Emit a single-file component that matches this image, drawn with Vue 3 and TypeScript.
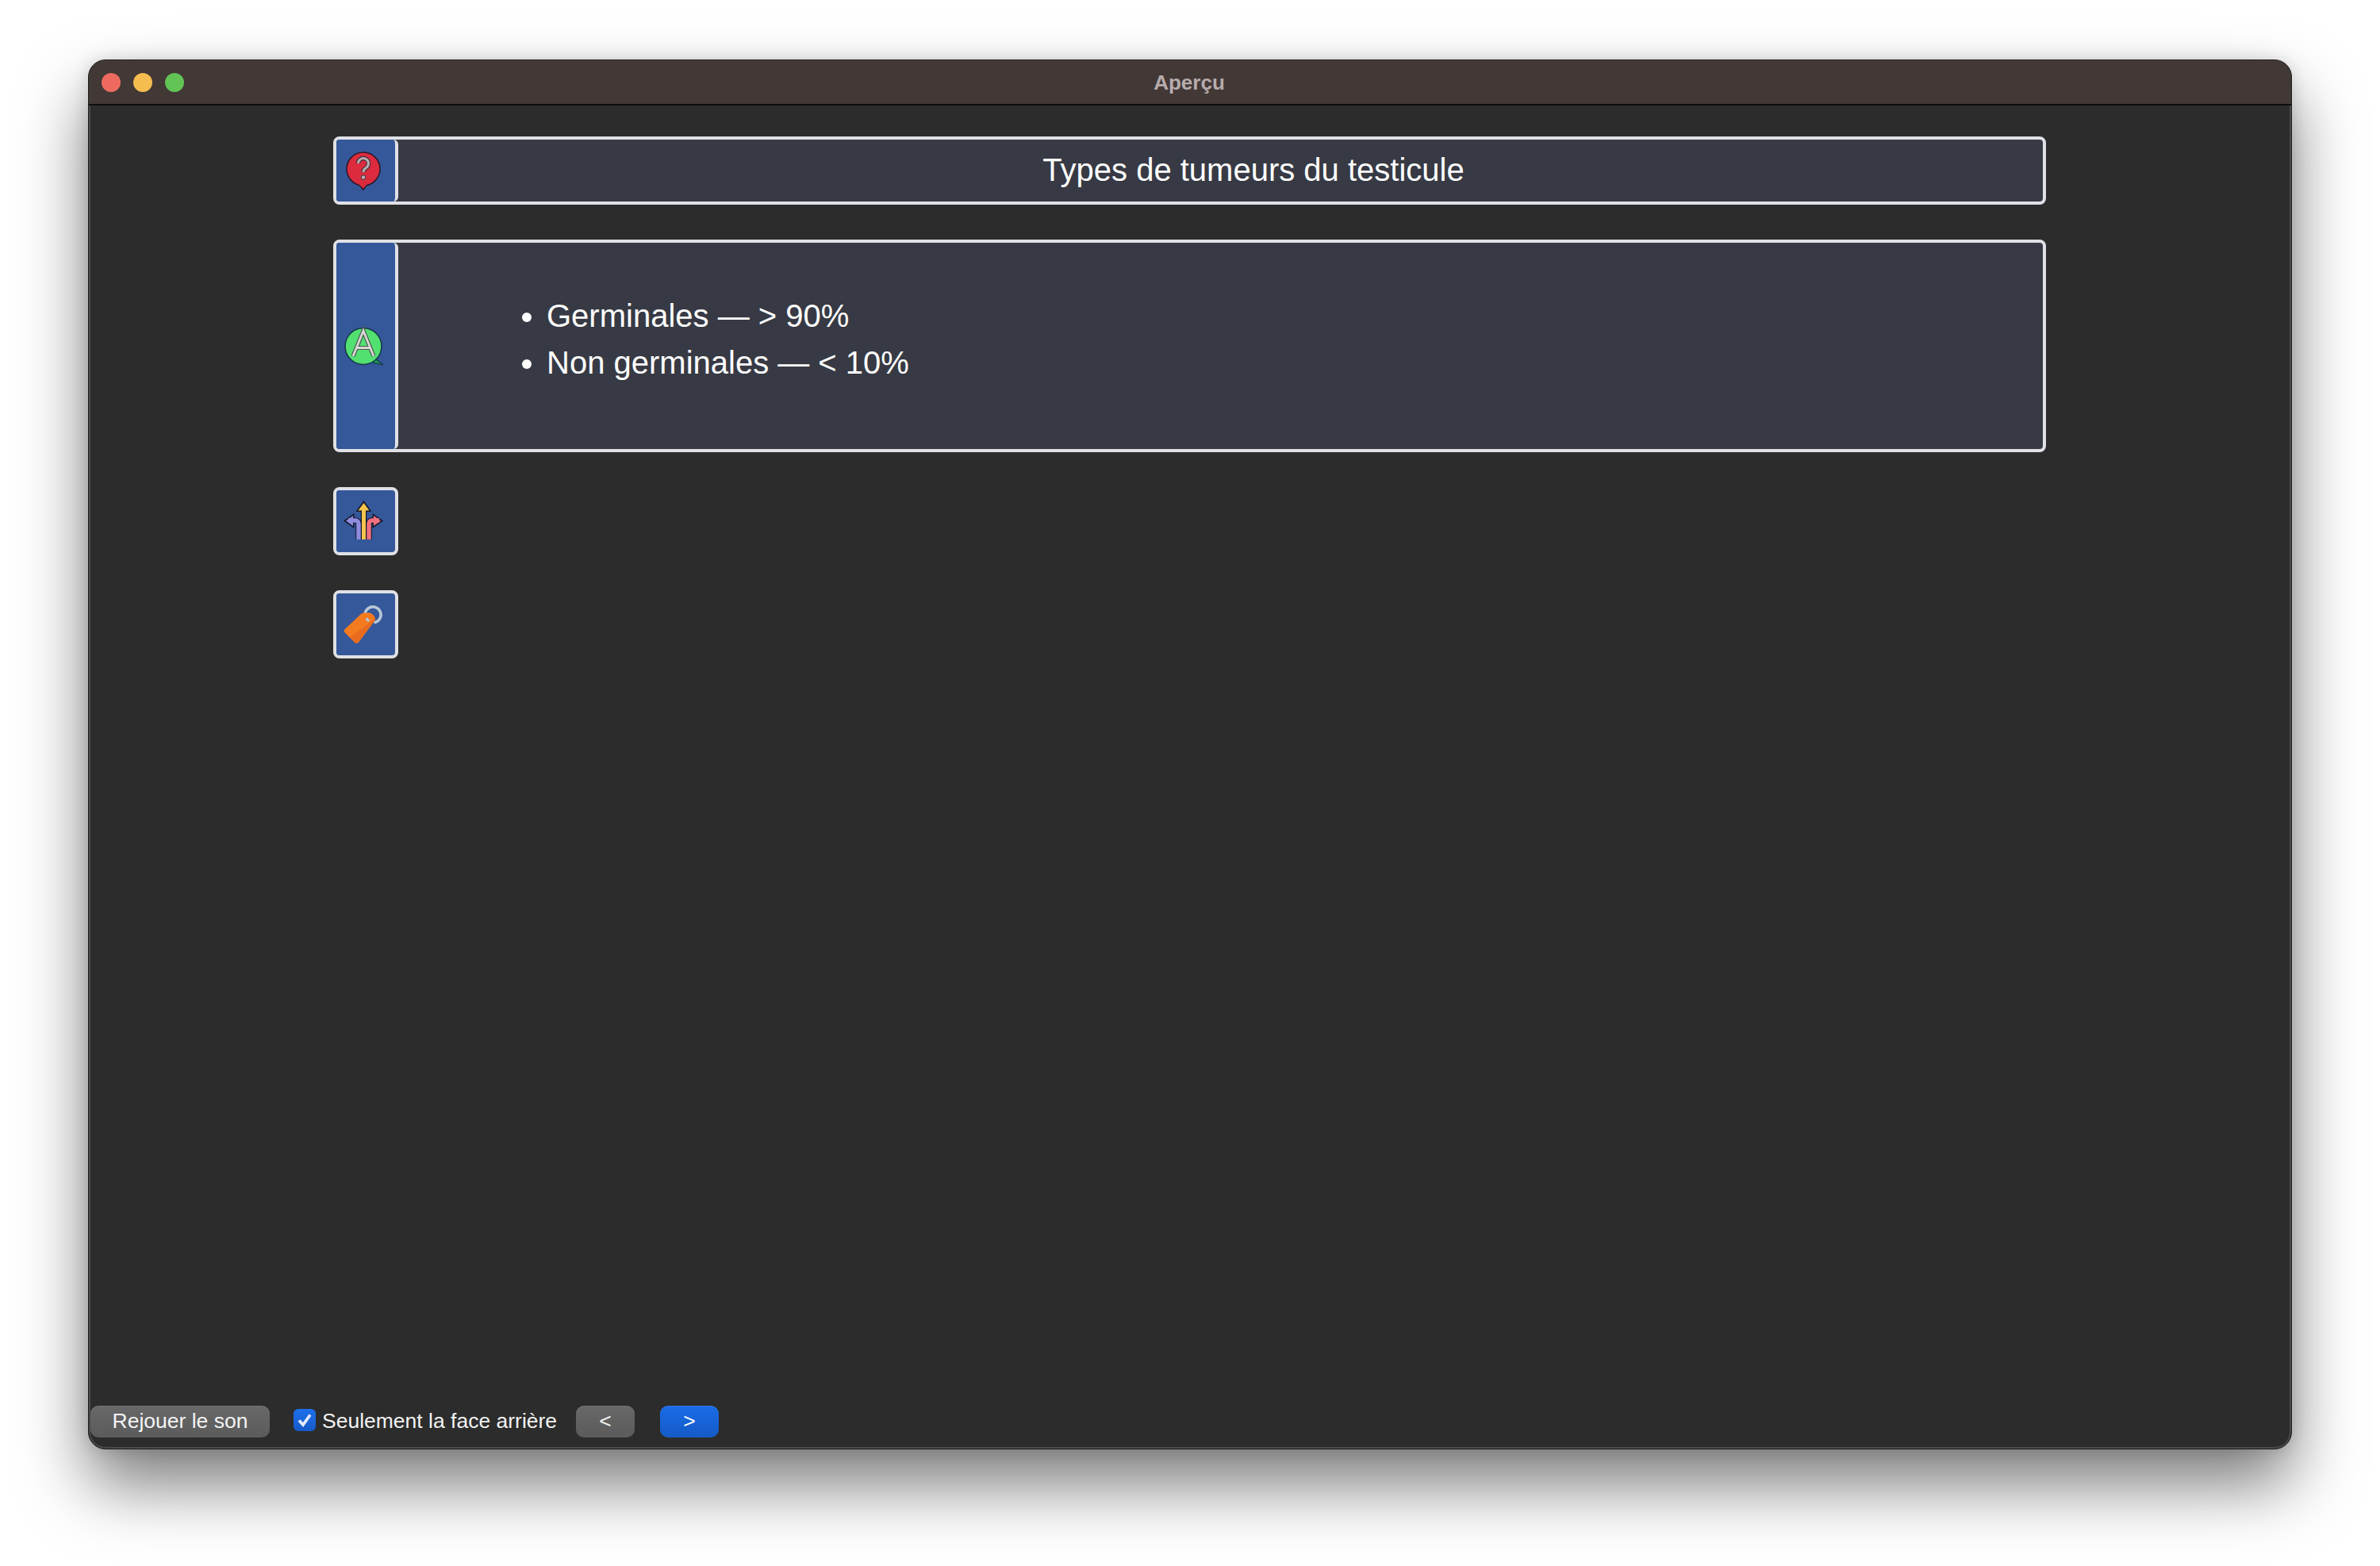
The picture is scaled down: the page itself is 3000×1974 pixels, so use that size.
<script setup lang="ts">
const lights: string[] = ['#ee6a5f', '#f5bd4f', '#61c454']
const items: string[] = ['Germinales — > 90%', 'Non germinales — < 10%']
</script>

<template>
  <div class="stage">
    <div class="window">
      <header class="titlebar">
        <div class="lights">
          <span v-for="c in lights" :key="c" class="light" :style="{ background: c }"></span>
        </div>
        <span class="wintitle">Aperçu</span>
      </header>

      <main class="content">
        <section class="card title-card">
          <div class="icon-col">
            <svg class="ico" viewBox="0 0 60 60">
              <path d="M21 47 27 54l5-7z" fill="#dc2b3f" stroke="#2b1a2a" stroke-width="2" />
              <circle cx="27" cy="28" r="21" fill="#dc2b3f" stroke="#2b1a2a" stroke-width="1.600" />
              <path d="M21 47 27 52.500l5-5.500z" fill="#dc2b3f" />
              <path d="M20.500 21a6.500 6.500 0 1 1 10 5.500c-2.300 1.500-3.500 2.500-3.500 5.500" fill="none" stroke="#3d3038" stroke-width="5.400" />
              <path d="M20.500 21a6.500 6.500 0 1 1 10 5.500c-2.300 1.500-3.500 2.500-3.500 5.500" fill="none" stroke="#b9adb2" stroke-width="3" />
              <circle cx="27" cy="38.500" r="2.800" fill="#b9adb2" stroke="#3d3038" />
            </svg>
          </div>
          <h1 class="title">Types de tumeurs du testicule</h1>
        </section>

        <section class="card answer-card">
          <div class="icon-col">
            <svg class="ico" viewBox="0 0 60 60">
              <path d="M42 46 52 54l-13-3z" fill="#1c9a50" stroke="#17384a" stroke-width="1.200" />
              <circle cx="27" cy="30.500" r="23" fill="#52e070" stroke="#17384a" stroke-width="1.600" />
              <path d="M14 43 27 11l13 32M18.500 32.500h17" fill="none" stroke="#4b5a56" stroke-width="5.200" />
              <path d="M14 43 27 11l13 32M18.500 32.500h17" fill="none" stroke="#d6d8d0" stroke-width="2.800" />
            </svg>
          </div>
          <ul class="list">
            <li v-for="t in items" :key="t">{{ t }}</li>
          </ul>
        </section>

        <section class="card square">
          <div class="icon-col">
            <svg class="ico" viewBox="0 0 60 60">
              <path d="M21 53V33a4 4 0 0 0-4-4H8" fill="none" stroke="#16182a" stroke-width="7.500" />
              <path d="M34 53V33a4 4 0 0 1 4-4h9" fill="none" stroke="#16182a" stroke-width="7.500" />
              <path d="M27.500 53V14" fill="none" stroke="#16182a" stroke-width="7.500" />
              <path d="M2 29.500 15.500 20v19zM52 29.500 38.500 20v19zM27.500 4l10 14h-20z" fill="#16182a" />
              <path d="M21 53V33a4 4 0 0 0-4-4H8" fill="none" stroke="#8f8ce0" stroke-width="5.500" />
              <path d="M34 53V33a4 4 0 0 1 4-4h9" fill="none" stroke="#f0707f" stroke-width="5.500" />
              <path d="M5 29.500 14 23v13z" fill="#8f8ce0" />
              <path d="M49 29.500 40 23v13z" fill="#f0707f" />
              <path d="M27.500 53V14" fill="none" stroke="#f4c44e" stroke-width="5" />
              <path d="M27.500 7l7 9.500h-14z" fill="#f4c44e" />
            </svg>
          </div>
        </section>

        <section class="card square">
          <div class="icon-col">
            <svg class="ico" viewBox="0 0 60 60">
              <path d="M32 25a10 10 0 1 1 10 2.500" fill="none" stroke="#b7c7d6" stroke-width="3.600" stroke-linecap="round" />
              <path d="M35 15.500c3 .5 6.500 4 7 7.500 0 1.300-.6 2.500-1.500 3.500L21 52.500c-1.500 1.800-3.300 1.800-5 .3L3.800 40.500c-1.600-1.500-1.600-3 0-4.500L24 17c1-1 2-1.500 3-1.500z" fill="#f47a20" />
              <path d="M42 23c0 1.300-.6 2.500-1.500 3.500L21 52.500c-1.500 1.800-3.300 1.800-5 .3L10 46.500z" fill="#e86c20" />
              <path d="M31.500 23.500a2 2 0 0 0 2 1.500" fill="none" stroke="#b7c7d6" stroke-width="3.200" stroke-linecap="round" />
            </svg>
          </div>
        </section>
      </main>

      <footer class="bar">
        <button class="btn replay" type="button">Rejouer le son</button>
        <label class="check">
          <span class="box">
            <svg viewBox="0 0 28 28" width="28" height="28">
              <path d="M7 14.500 12 20 21 7.500" fill="none" stroke="#e4ecfb" stroke-width="3.800" />
            </svg>
          </span>
          <span>Seulement la face arrière</span>
        </label>
        <button class="btn nav" type="button">&lt;</button>
        <button class="btn nav primary" type="button">&gt;</button>
      </footer>
    </div>
  </div>
</template>

<style>
html, body { margin: 0; background: #fff; }
</style>

<style scoped>
.stage {
  width: 3000px;
  height: 1974px;
  box-sizing: border-box;
  padding: 75px 111px 147px;
  background: #fff;
  overflow: hidden;
  font-family: "Liberation Sans", Arial, sans-serif;
}
.window {
  height: 100%;
  display: flex;
  flex-direction: column;
  box-sizing: border-box;
  border: 1px solid #1a1a1a;
  border-radius: 22px;
  background: #2c2c2c;
  overflow: hidden;
  box-shadow: 0 44px 84px rgba(0, 0, 0, 0.52), 0 0 20px rgba(0, 0, 0, 0.14), inset 0 0 0 2px #4a4a4a;
}
.titlebar {
  position: relative;
  height: 57px;
  box-sizing: border-box;
  flex: none;
  display: flex;
  align-items: center;
  justify-content: center;
  background: #423836;
  border-top: 1px solid #4a4240;
  border-bottom: 2px solid #0e0e0e;
}
.lights {
  position: absolute;
  left: 16px;
  top: 15px;
  display: flex;
  gap: 16px;
}
.light { width: 24px; height: 24px; border-radius: 50%; }
.wintitle { font-size: 26px; font-weight: 700; color: #b6abac; margin-left: -2px; }
.content {
  flex: 1;
  display: flex;
  flex-direction: column;
  gap: 44px;
  padding: 39px 0 0 308px;
}
.card {
  width: 2159px;
  box-sizing: border-box;
  display: flex;
  border: 4px solid #e0e1e6;
  border-radius: 8px;
  background: #373a44;
  color: #fff;
}
.title-card { height: 86px; }
.answer-card { height: 268px; }
.square { width: 82px; height: 86px; background: #35589a; }
.icon-col {
  flex: none;
  width: 78px;
  box-sizing: border-box;
  border-right: 4px solid #e0e1e6;
  border-radius: 4px 6px 6px 4px;
  background: #35589a;
  display: flex;
  align-items: center;
  justify-content: center;
}
.square .icon-col { width: 74px; border-right: 0; }
.ico { width: 60px; height: 60px; flex: none; }
.title {
  flex: 1;
  margin: 0;
  padding-left: 83px;
  font-size: 40px;
  font-weight: 400;
  line-height: 77px;
  text-align: center;
}
.list {
  margin: 0;
  padding: 63px 0 0 187px;
  font-size: 40px;
  line-height: 59px;
}
.bar {
  flex: none;
  height: 54px;
  box-sizing: border-box;
  padding-left: 2px;
  display: flex;
  align-items: flex-start;
  color: #f2f2f2;
  font-size: 26.5px;
}
.btn {
  height: 40px;
  box-sizing: border-box;
  border: 0;
  border-radius: 10px;
  padding: 0 0 2px;
  color: #f4f4f4;
  font: 26.5px/38px "Liberation Sans", Arial, sans-serif;
  background: linear-gradient(#686868, #5b5b5b);
  box-shadow: inset 0 1px 0 rgba(255, 255, 255, 0.1);
}
.replay { width: 226px; }
.check {
  display: flex;
  align-items: center;
  gap: 8px;
  height: 38px;
  margin: 0 24px 0 30px;
}
.box {
  width: 28px;
  height: 28px;
  margin-bottom: 2px;
  border-radius: 6px;
  background: linear-gradient(#1e70ec, #1759c8);
}
.box svg { display: block; }
.nav { width: 74px; }
.primary {
  margin-left: 32px;
  background: linear-gradient(#1a6be8, #155bc6);
  color: #fff;
}
</style>
